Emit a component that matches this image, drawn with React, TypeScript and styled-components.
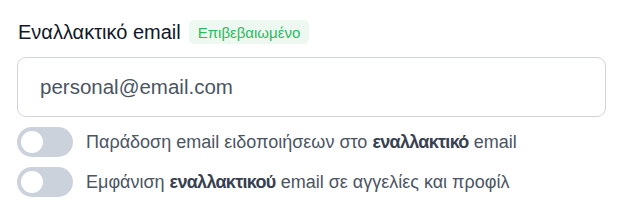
import React, { useState } from "react";
import styled, { createGlobalStyle } from "styled-components";

const Global = createGlobalStyle`
  html, body { margin: 0; padding: 0; background: #ffffff; }
  body { font-family: "Liberation Sans", Arial, sans-serif; }
`;

const Wrapper = styled.div`
  padding: 18px 29px 0 17px;
  display: flex;
  flex-direction: column;
`;

const LabelRow = styled.div`
  display: flex;
  align-items: center;
  gap: 8px;
  height: 28px;
`;

const Label = styled.label`
  font-size: 20px;
  color: #111827;
  padding-left: 1px;
`;

const Badge = styled.span`
  display: inline-flex;
  align-items: center;
  height: 24px;
  padding: 0 9px;
  border-radius: 5px;
  background: #ecf8f0;
  color: #2fb862;
  font-size: 15px;
`;

const Input = styled.input`
  box-sizing: border-box;
  margin-top: 11px;
  width: 589px;
  height: 60px;
  border: 1px solid #d1d5db;
  border-radius: 9px;
  padding: 0 22px;
  font-family: "Liberation Sans", Arial, sans-serif;
  font-size: 20.5px;
  color: #4b5563;
  outline: none;
`;

const Options = styled.div`
  margin-top: 10px;
  display: flex;
  flex-direction: column;
  gap: 10px;
`;

const OptionRow = styled.div`
  display: flex;
  align-items: center;
  gap: 13px;
  height: 30px;
`;

const Track = styled.button<{ $on: boolean }>`
  position: relative;
  width: 56px;
  height: 30px;
  border: none;
  padding: 0;
  border-radius: 15px;
  background: ${(p) => (p.$on ? "#22c55e" : "#cbd2dc")};
  cursor: pointer;
  flex-shrink: 0;
`;

const Knob = styled.span<{ $on: boolean }>`
  position: absolute;
  top: 4px;
  left: ${(p) => (p.$on ? "30px" : "4px")};
  width: 22px;
  height: 22px;
  border-radius: 50%;
  background: #ffffff;
`;

const OptionText = styled.span`
  font-size: 18px;
  color: #4b5563;
  b { font-weight: 700; color: #374151; letter-spacing: -0.7px; }
`;

function Toggle() {
  const [on, setOn] = useState(false);
  return (
    <Track $on={on} onClick={() => setOn(!on)} aria-pressed={on}>
      <Knob $on={on} />
    </Track>
  );
}

export default function App() {
  return (
    <>
      <Global />
      <Wrapper>
        <LabelRow>
          <Label>Εναλλακτικό email</Label>
          <Badge>Επιβεβαιωμένο</Badge>
        </LabelRow>
        <Input defaultValue="personal@email.com" />
        <Options>
          <OptionRow>
            <Toggle />
            <OptionText>
              Παράδοση email ειδοποιήσεων στο <b>εναλλακτικό</b> email
            </OptionText>
          </OptionRow>
          <OptionRow>
            <Toggle />
            <OptionText>
              Εμφάνιση <b>εναλλακτικού</b> email σε αγγελίες και προφίλ
            </OptionText>
          </OptionRow>
        </Options>
      </Wrapper>
    </>
  );
}
